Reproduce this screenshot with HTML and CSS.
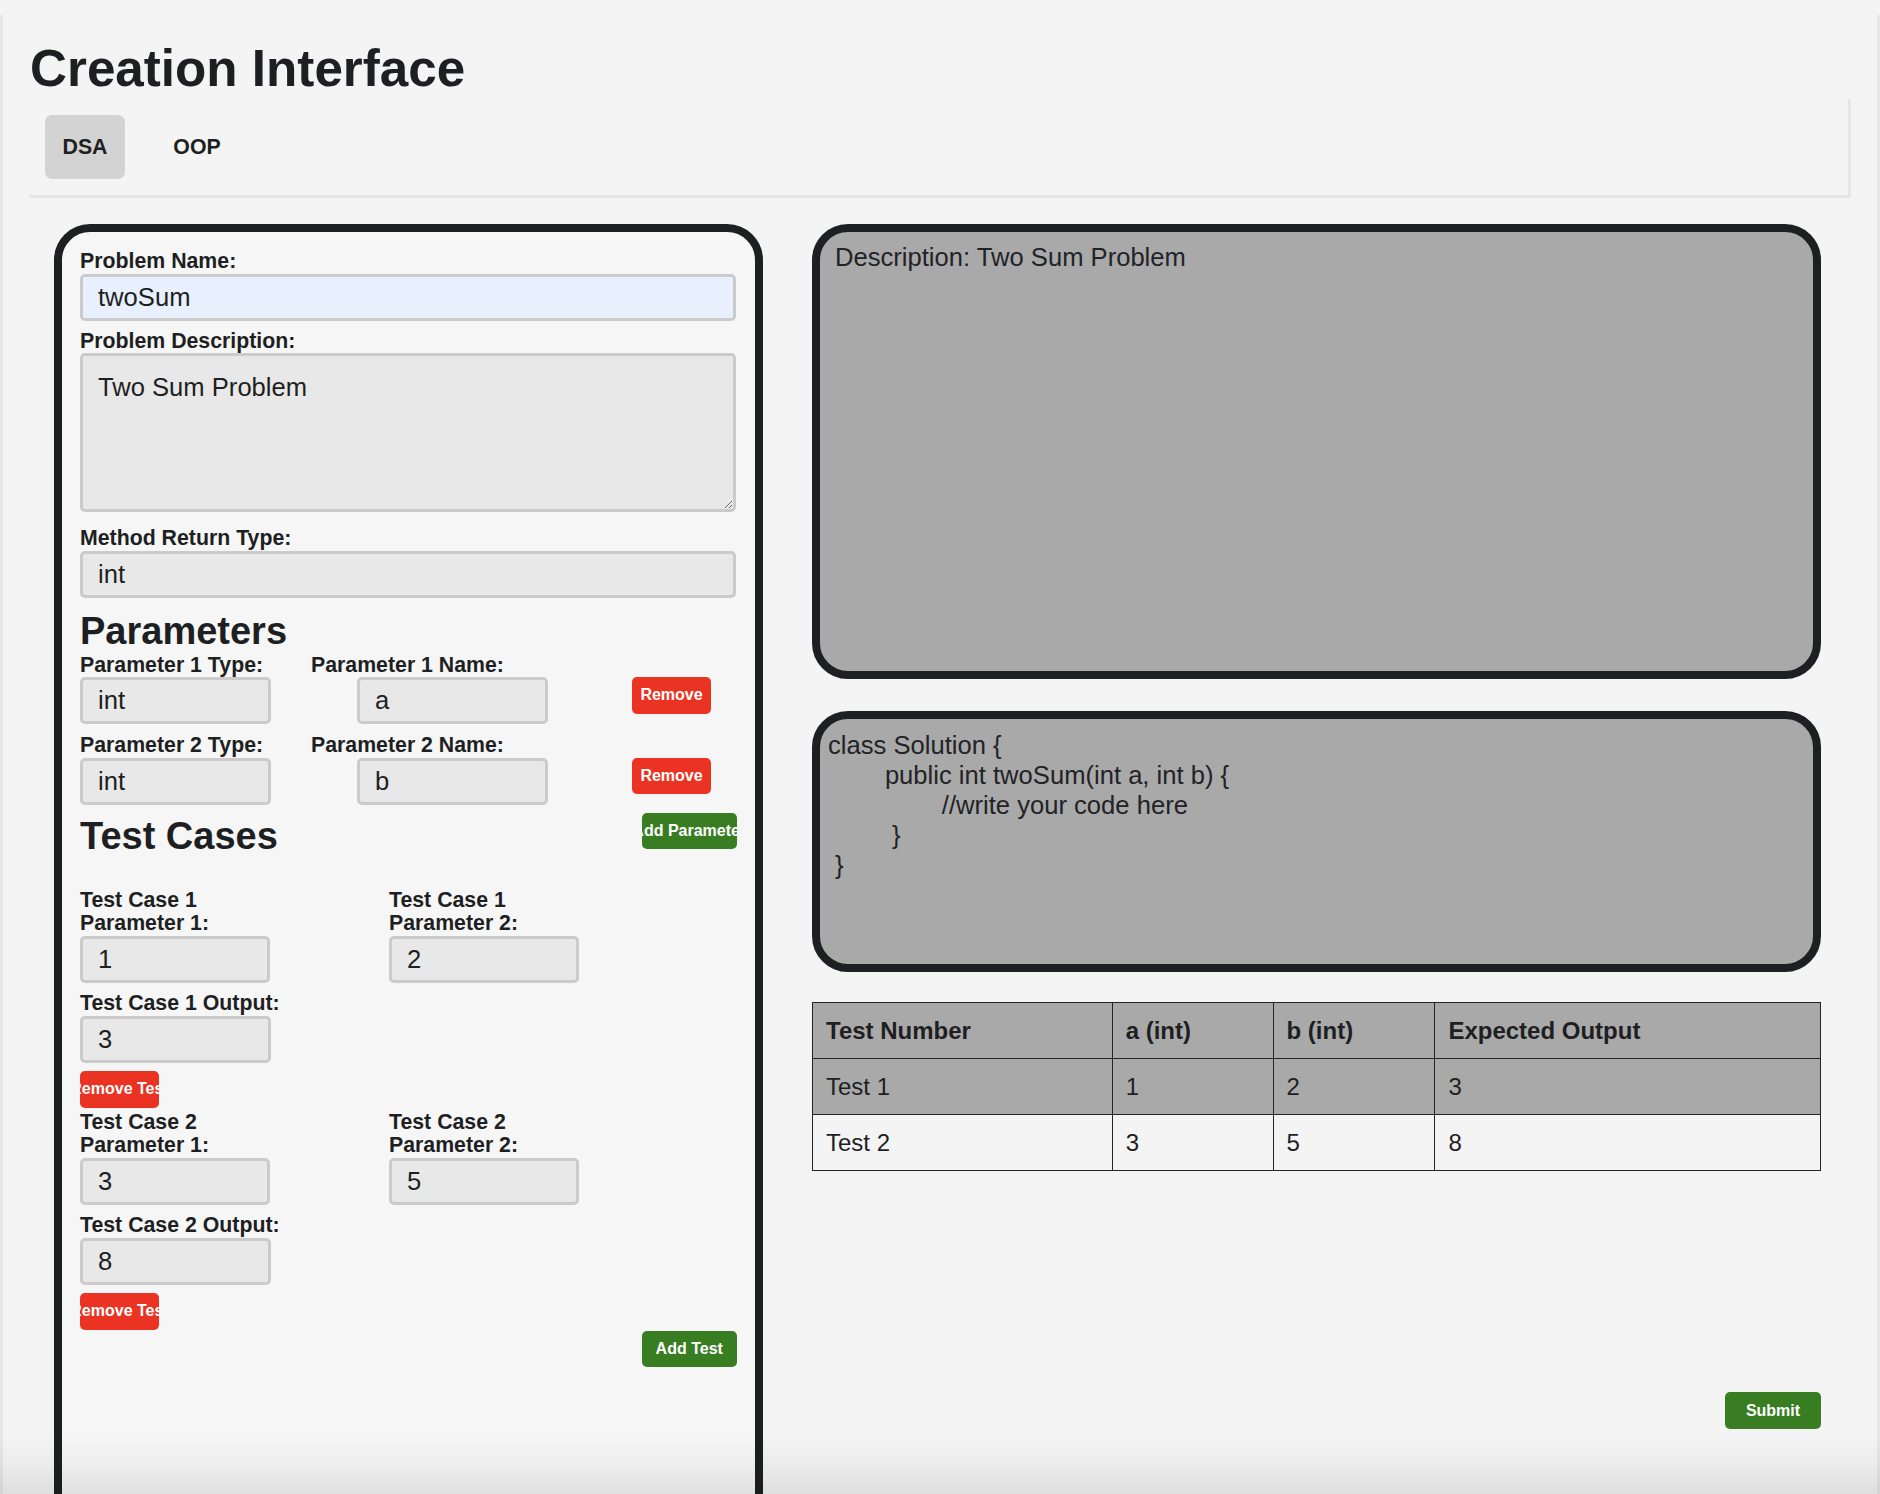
FILE: index.html
```html
<!DOCTYPE html>
<html lang="en">
<head>
<meta charset="utf-8">
<title>Creation Interface</title>
<link rel="stylesheet" href="styles.css">
</head>
<body>
<div class="page">
  <h1 class="title">Creation Interface</h1>
  <div class="tabs">
    <button class="tab tab-active">DSA</button>
    <button class="tab">OOP</button>
  </div>

  <div class="main">
    <div class="editor">
      <label class="lbl">Problem Name:</label>
      <input class="inp inp-full inp-autofill" type="text" value="twoSum">
      <label class="lbl">Problem Description:</label>
      <textarea class="inp txt">Two Sum Problem</textarea>
      <label class="lbl">Method Return Type:</label>
      <input class="inp inp-full" type="text" value="int">

      <h2 class="sec sec-params">Parameters</h2>
      <div class="param-row">
        <div class="field f-type">
          <label class="lbl">Parameter 1 Type:</label>
          <input class="inp inp-sm" type="text" value="int">
        </div>
        <div class="field f-name">
          <label class="lbl">Parameter 1 Name:</label>
          <input class="inp inp-sm inp-shift" type="text" value="a">
        </div>
        <button class="btn btn-red btn-rm">Remove</button>
      </div>
      <div class="param-row">
        <div class="field f-type">
          <label class="lbl">Parameter 2 Type:</label>
          <input class="inp inp-sm" type="text" value="int">
        </div>
        <div class="field f-name">
          <label class="lbl">Parameter 2 Name:</label>
          <input class="inp inp-sm inp-shift" type="text" value="b">
        </div>
        <button class="btn btn-red btn-rm">Remove</button>
      </div>

      <div class="sec-row">
        <h2 class="sec">Test Cases</h2>
        <button class="btn btn-green btn-addparam">Add Parameter</button>
      </div>

      <div class="tests">
        <div class="test">
          <div class="tc-row">
            <div class="field tc-field">
              <label class="lbl">Test Case 1 Parameter 1:</label>
              <input class="inp inp-tc" type="text" value="1">
            </div>
            <div class="field tc-field">
              <label class="lbl">Test Case 1 Parameter 2:</label>
              <input class="inp inp-tc" type="text" value="2">
            </div>
          </div>
          <div class="field tc-out">
            <label class="lbl">Test Case 1 Output:</label>
            <input class="inp inp-sm" type="text" value="3">
          </div>
          <button class="btn btn-red btn-rmtest">Remove Test</button>
        </div>
        <div class="test">
          <div class="tc-row">
            <div class="field tc-field">
              <label class="lbl">Test Case 2 Parameter 1:</label>
              <input class="inp inp-tc" type="text" value="3">
            </div>
            <div class="field tc-field">
              <label class="lbl">Test Case 2 Parameter 2:</label>
              <input class="inp inp-tc" type="text" value="5">
            </div>
          </div>
          <div class="field tc-out">
            <label class="lbl">Test Case 2 Output:</label>
            <input class="inp inp-sm" type="text" value="8">
          </div>
          <button class="btn btn-red btn-rmtest">Remove Test</button>
        </div>
        <div class="add-row">
          <button class="btn btn-green">Add Test</button>
        </div>
      </div>
    </div>

    <div class="preview">
      <div class="box desc">Description: Two Sum Problem</div>
      <div class="box code">class Solution {
	public int twoSum(int a, int b) {
		//write your code here
	 }
 }</div>
      <table class="tbl">
        <thead>
          <tr class="shaded">
            <th class="c1">Test Number</th>
            <th class="c2">a (int)</th>
            <th class="c3">b (int)</th>
            <th class="c4">Expected Output</th>
          </tr>
        </thead>
        <tbody>
          <tr class="shaded">
            <td>Test 1</td><td>1</td><td>2</td><td>3</td>
          </tr>
          <tr>
            <td>Test 2</td><td>3</td><td>5</td><td>8</td>
          </tr>
        </tbody>
      </table>
      <button class="btn btn-green btn-submit">Submit</button>
    </div>
  </div>
</div>
<div class="bottom-fade"></div>
</body>
</html>
```

FILE: styles.css
```css
* { box-sizing: border-box; }

html, body {
  margin: 0;
  background: #f4f4f4;
}

body {
  font-family: "Liberation Sans", Arial, Helvetica, sans-serif;
  color: #1e1f22;
  font-size: 25.6px;
}

.page {
  margin-top: 15px;
  border-left: 3px solid #e6e6e6;
  border-right: 3px solid #e6e6e6;
  padding: 25px 29px 0 23px;
  min-height: 1600px;
}

.title {
  margin: 0 0 -2px 4px;
  font-size: 51.2px;
  line-height: 58px;
  font-weight: 700;
  color: #1e1f22;
}

.tabs {
  display: flex;
  gap: 32px;
  height: 99px;
  padding: 19px 19px 16px 19px;
  box-shadow: 3px 3px 0 #e6e6e6;
}

.tab {
  height: 64px;
  min-width: 80px;
  padding: 0 16px;
  border: none;
  border-radius: 7px;
  background: transparent;
  font-family: "Liberation Sans", Arial, sans-serif;
  font-size: 21.3px;
  font-weight: 700;
  color: #1e1f22;
}

.tab-active {
  background: #d3d3d3;
}

.main {
  display: flex;
  align-items: flex-start;
  gap: 49px;
  margin: 29px 27px 0 28px;
}

/* left editor panel */
.editor {
  width: 709px;
  flex: none;
  height: 1370px;
  border: 8px solid #1e1f22;
  border-radius: 36px;
  background: #f6f6f6;
  padding: 18px 18px 18px 18px;
}

.lbl {
  display: block;
  font-size: 21.3px;
  line-height: 23.5px;
  font-weight: 700;
  color: #1e1f22;
}

.inp {
  display: block;
  height: 47px;
  border: 3px solid #cbcbcb;
  border-radius: 5px;
  background: #e8e8e8;
  padding: 0 15px;
  font-family: "Liberation Sans", Arial, sans-serif;
  font-size: 25.6px;
  color: #1e1f22;
  outline: none;
}

.inp-full {
  width: 656px;
  margin-bottom: 9px;
}

.inp-autofill {
  background: #e8f0fe;
}

.txt {
  width: 656px;
  height: 159px;
  padding: 16px 15px;
  line-height: 30px;
  margin-bottom: 15px;
  resize: both;
}

.sec {
  margin: 0;
  font-size: 38px;
  line-height: 42px;
  font-weight: 700;
  color: #1e1f22;
}

.sec-params {
  margin: 12px 0 2px 0;
}

.param-row {
  display: flex;
  align-items: flex-start;
  margin-bottom: 10px;
}

.field {
  display: flex;
  flex-direction: column;
}

.f-type {
  width: 191px;
  margin-right: 40px;
}

.f-name {
  width: 237px;
  margin-right: 84px;
}

.inp-sm {
  width: 191px;
}

.inp-shift {
  margin-left: 46px;
}

.btn {
  display: flex;
  justify-content: center;
  align-items: center;
  height: 36.5px;
  padding: 0;
  border: none;
  border-radius: 5px;
  overflow: hidden;
  white-space: nowrap;
  font-family: "Liberation Sans", Arial, sans-serif;
  font-size: 16px;
  font-weight: 700;
  color: #ffffff;
  flex: none;
}

.btn-red {
  background: #ea3323;
  width: 79px;
}

.btn-green {
  background: #387d22;
  width: 95.5px;
}

.btn-rm {
  margin-top: 23.5px;
}

.sec-row {
  display: flex;
  justify-content: space-between;
  align-items: flex-start;
}

.btn-addparam {
  margin-top: -2px;
}

.tests {
  margin-top: 32px;
}

.test + .test {
  margin-top: 3px;
}

.tc-row {
  display: flex;
  gap: 109px;
}

.tc-field {
  width: 200px;
}

.inp-tc {
  width: 190px;
}

.tc-out {
  margin-top: 9.5px;
}

.btn-rmtest {
  margin-top: 8.5px;
}

.add-row {
  display: flex;
  justify-content: flex-end;
  margin-top: 1px;
}

/* right preview column */
.preview {
  width: 1009px;
  flex: none;
  display: flex;
  flex-direction: column;
}

.box {
  border: 8px solid #1e1f22;
  border-radius: 36px;
  background: #a9a9a9;
  font-size: 25.6px;
  color: #222326;
}

.desc {
  height: 455px;
  padding: 11px 15px;
}

.code {
  margin-top: 32px;
  height: 261px;
  padding: 11px 8px;
  line-height: 30px;
  white-space: pre;
  tab-size: 8;
  -moz-tab-size: 8;
}

.tbl {
  margin-top: 30px;
  width: 1009px;
  border-collapse: collapse;
  font-size: 24px;
  color: #1e1f22;
}

.tbl th,
.tbl td {
  border: 1.5px solid #222326;
  padding: 14px 13px;
  text-align: left;
  line-height: 27px;
}

.tbl th {
  font-weight: 700;
}

.tbl .c1 { width: 300px; }
.tbl .c2 { width: 161px; }
.tbl .c3 { width: 162px; }
.tbl .c4 { width: 386px; }

.shaded {
  background: #a9a9a9;
}

.btn-submit {
  align-self: flex-end;
  margin-top: 221px;
  width: 96px;
  height: 37px;
}

.bottom-fade {
  position: fixed;
  left: 0;
  right: 0;
  bottom: 0;
  height: 60px;
  pointer-events: none;
  background: linear-gradient(to bottom, rgba(0, 0, 0, 0) 0%, rgba(0, 0, 0, 0.035) 55%, rgba(0, 0, 0, 0.085) 100%);
}
```
